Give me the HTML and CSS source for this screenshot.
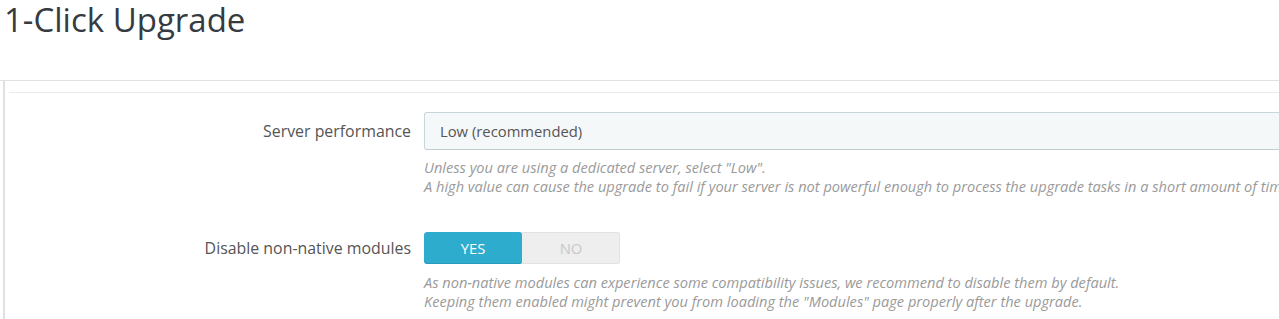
FILE: index.html
```html
<!DOCTYPE html>
<html lang="en">
<head>
<meta charset="utf-8">
<title>1-Click Upgrade</title>
<link rel="stylesheet" href="styles.css">
</head>
<body>
<h1 class="page-title">1-Click Upgrade</h1>
<div class="panel">
  <div class="panel-inner">
    <div class="panel-heading"></div>
    <div class="form-row first">
      <label class="control-label">Server performance</label>
      <div class="control">
        <div class="select">Low (recommended)</div>
        <p class="help">Unless you are using a dedicated server, select "Low".<br>A high value can cause the upgrade to fail if your server is not powerful enough to process the upgrade tasks in a short amount of time.</p>
      </div>
    </div>
    <div class="form-row second">
      <label class="control-label">Disable non-native modules</label>
      <div class="control">
        <div class="switch">
          <span class="opt on">YES</span>
          <span class="opt off">NO</span>
        </div>
        <p class="help">As non-native modules can experience some compatibility issues, we recommend to disable them by default.<br>Keeping them enabled might prevent you from loading the "Modules" page properly after the upgrade.</p>
      </div>
    </div>
  </div>
</div>
</body>
</html>
```
FILE: styles.css
```css
html, body {
  margin: 0;
  padding: 0;
  background: #fff;
  overflow: hidden;
}
body {
  font-family: "Open Sans", "Liberation Sans", sans-serif;
  color: #555;
  width: 1279px;
  height: 319px;
}
.page-title {
  margin: 0;
  padding: 2px 0 0 4px;
  font-size: 33px;
  line-height: 36px;
  font-weight: 400;
  color: #363a41;
}
.panel {
  margin-top: 42px;
  border-top: 1px solid #e0e2e3;
}
.panel-inner {
  margin-left: 3px;
  border-left: 2px solid #dde3e5;
  padding-left: 4px;
  height: 238px;
  overflow: hidden;
}
.panel-heading {
  height: 11px;
  border-bottom: 1px solid #eaeaea;
}
.form-row {
  display: flex;
  align-items: flex-start;
  gap: 13px;
  overflow: hidden;
}
.form-row.first {
  margin-top: 19px;
}
.form-row.second {
  margin-top: 36px;
}
.control-label {
  width: 402px;
  flex: none;
  text-align: right;
  font-size: 15.9px;
  color: #555;
  white-space: nowrap;
}
.first .control-label {
  line-height: 38px;
}
.second .control-label {
  line-height: 32px;
}
.control {
  flex: none;
  width: 1000px;
}
.select {
  box-sizing: border-box;
  height: 38px;
  width: 1000px;
  background: #f5f8f9;
  border: 1px solid #c7d6db;
  border-bottom-color: #c2cdd1;
  border-radius: 3px;
  padding-left: 15px;
  font-size: 14.8px;
  line-height: 36px;
  color: #555;
}
.help {
  margin: 8px 0 0;
  font-size: 14.6px;
  line-height: 19px;
  font-style: italic;
  color: #9a9a9a;
  white-space: nowrap;
}
.second .help {
  margin-top: 9px;
}
.switch {
  display: flex;
  width: 196px;
  height: 32px;
  border-radius: 3px;
  overflow: hidden;
  background: #eee;
  box-shadow: inset 0 0 0 1px #e2e2e2;
}
.opt {
  flex: 1;
  text-align: center;
  font-size: 14.8px;
  line-height: 32px;
  text-transform: uppercase;
}
.opt.on {
  background: #2eacce;
  color: #fff;
  border-radius: 3px;
  box-shadow: inset 0 -1px 0 #2a9ab8;
}
.opt.off {
  color: #c8c8c8;
}
```
